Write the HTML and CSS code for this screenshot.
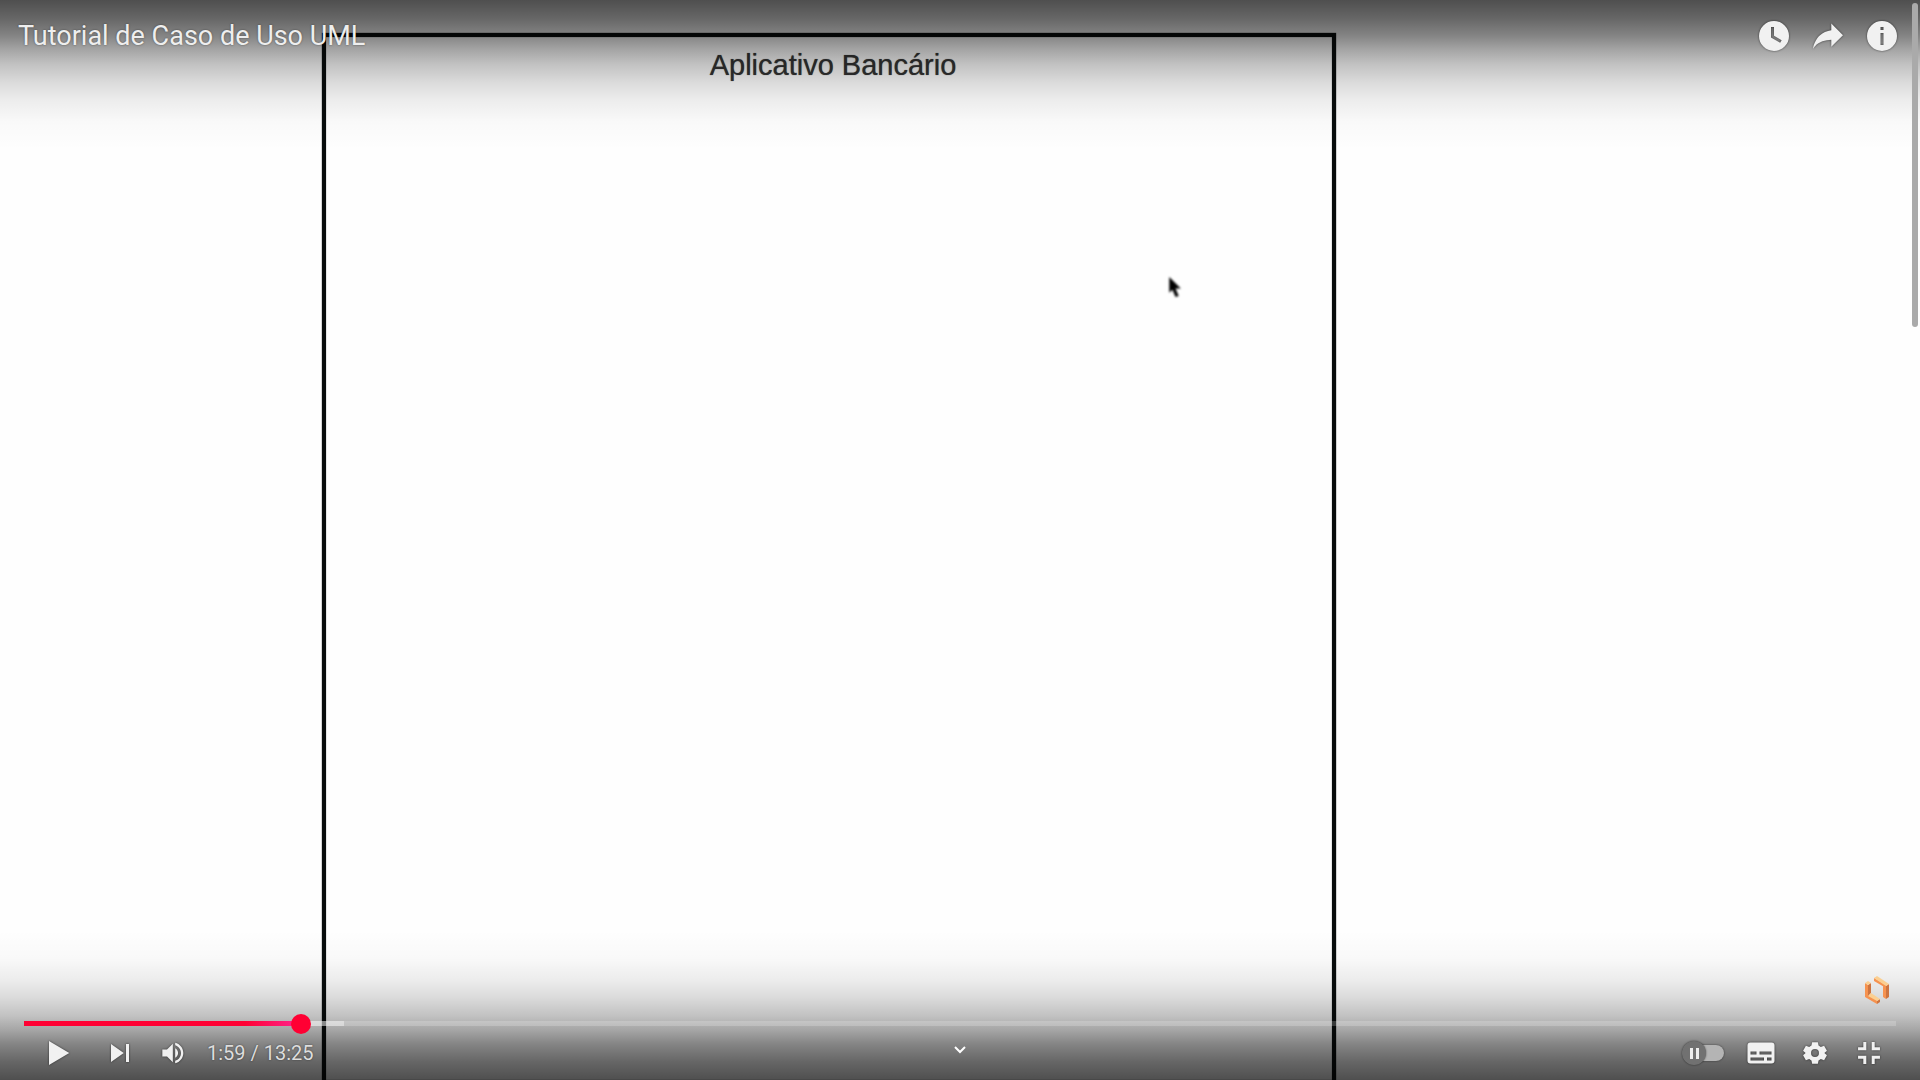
FILE: index.html
```html
<!DOCTYPE html>
<html lang="pt-BR">
<head>
<meta charset="utf-8">
<title>Tutorial de Caso de Uso UML</title>
<link rel="stylesheet" href="styles.css">
</head>
<body>
<main class="player">
  <section class="video" aria-label="Vídeo">
    <div class="frame"><h2 class="frame-title">Aplicativo Bancário</h2></div>
    <svg class="cursor" viewBox="0 0 12 19" aria-hidden="true"><path d="M1 0v15l3-3 3 7 3-1-3-7h5z" fill="#000"/></svg>
  </section>
  <div class="overlay">
    <header class="top-bar">
      <h1 class="title"><a href="#">Tutorial de Caso de Uso UML</a></h1>
      <div class="group">
        <button class="btn" aria-label="Assistir mais tarde"><svg viewBox="0 0 36 36"><path fill-rule="evenodd" d="M18 8a10 10 0 1 0 0 20 10 10 0 0 0 0-20zM16 19.02V12h2v5.86l5.1 2.95-1 1.73z"/></svg></button>
        <button class="btn" aria-label="Compartilhar"><svg viewBox="0 0 36 36"><path d="m20.2 14.19 0-4.45 7.79 7.79-7.79 7.56 0-4.56C16.27 20.69 12.1 21.81 9.34 24.76 8.8 25.13 7.6 27.29 8.12 25.65 9.08 21.32 11.8 17.18 15.98 15.38c1.33-.6 2.76-.98 4.21-1.19z"/></svg></button>
        <button class="btn" aria-label="Informações"><svg viewBox="0 0 36 36"><path fill-rule="evenodd" d="M18 8a10 10 0 1 0 0 20 10 10 0 0 0 0-20zM17 12h2v2h-2zM17 16h2v8h-2z"/></svg></button>
      </div>
    </header>
    <footer class="bottom-bar">
      <a class="watermark" href="#" aria-label="Lucidchart"><svg viewBox="0 0 24 28">
        <path fill="#f6924f" d="M0 7l3 2v11l-3-1zM18 9l3 2v12l-3-2zM0 19l3-1 9 6v4L0 21zM9 2l12 7v3L9 5z"/>
        <path fill="#cd7440" d="M3 9l3-2v10l-3 3zM21 10l3-2v13l-3 2zM12 25l3-2v3l-3 2z"/>
        <path fill="#fbcf91" d="M0 7l3-2 3 2-3 2zM9 2l3-2 12 8-3 2zM3 20l3-3 9 6-3 2z"/></svg></a>
      <div class="progress" style="--played:14.8%;--loaded:17.1%">
        <input class="seek" type="range" min="0" max="805" value="119" aria-label="Progresso">
      </div>
      <div class="controls">
        <div class="group">
          <button class="btn play" aria-label="Reproduzir"><svg viewBox="0 0 36 36"><path d="M12 26V10l13.5 8z"/></svg></button>
          <button class="btn" aria-label="Próximo"><svg viewBox="0 0 36 36"><path d="M12 24l8.5-6L12 12zM22 12v12h2V12z"/></svg></button>
          <button class="btn volume" aria-label="Volume"><svg viewBox="0 0 36 36"><path d="M8 21h4l5 5V10l-5 5H8zM19 14v8c1.48-.68 2.5-2.23 2.5-4s-1.02-3.26-2.5-4zM19 11.29c2.89.86 5 3.54 5 6.71s-2.11 5.85-5 6.71v2.06c4.01-.91 7-4.49 7-8.77s-2.99-7.86-7-8.77z"/></svg></button>
          <div class="time">1:59 / 13:25</div>
        </div>
        <button class="more" aria-label="Mais vídeos"><svg viewBox="0 0 12 8"><path d="M1 1l5 5 5-5" fill="none" stroke="#fff" stroke-width="2"/></svg></button>
        <div class="group group-end">
          <input class="autoplay" type="checkbox" aria-label="Reprodução automática">
          <button class="btn" aria-label="Legendas"><svg viewBox="0 0 36 36"><path fill-rule="evenodd" d="M11 11a2 2 0 0 0-2 2v10a2 2 0 0 0 2 2h14a2 2 0 0 0 2-2V13a2 2 0 0 0-2-2zM11 17h4v2h-4zM17 17h8v2h-8zM11 21h9v2h-9zM22 21h3v2h-3z"/></svg></button>
          <button class="btn" aria-label="Configurações"><svg viewBox="-1 -1 38 38"><path fill-rule="evenodd" d="M16 10.4h4l.5 2.4 1.6.9 2.3-.8 2 3.5-1.8 1.6-1 0 1 0 1.8 1.6-2 3.5-2.3-.8-1.6.9-.5 2.4h-4l-.5-2.4-1.6-.9-2.3.8-2-3.5 1.8-1.6-1.8-1.6 2-3.5 2.3.8 1.6-.9zM18 20.8a2.8 2.8 0 1 0 0-5.6 2.8 2.8 0 0 0 0 5.6z"/></svg></button>
          <button class="btn" aria-label="Sair da tela cheia"><svg viewBox="0 0 36 36"><path d="M10.7 14.2h3.5v-3.5h2v5.5h-5.5zM25.3 14.2h-3.5v-3.5h-2v5.5h5.5zM10.7 21.8h3.5v3.5h2v-5.5h-5.5zM25.3 21.8h-3.5v3.5h-2v-5.5h5.5z"/></svg></button>
        </div>
      </div>
    </footer>
  </div>
  <div class="scroll-thumb"></div>
</main>
</body>
</html>
```
FILE: styles.css
```css
* { box-sizing: border-box; }
body { margin: 0; background: #fff; font-family: Roboto, sans-serif; }
button { padding: 0; border: 0; background: none; cursor: pointer; }
a { color: inherit; text-decoration: none; }

.player { position: relative; display: grid; min-height: 100vh; overflow: hidden; }
.video, .overlay { grid-area: 1 / 1; }

/* Diagram shown in the video */
.video { display: grid; grid-template-columns: 322fr 1014fr 584fr; padding-top: 33px; background: #fefefe; }
.frame { grid-column: 2; border: 4px solid #080c0c; border-bottom: 0; box-shadow: 0 0 1px #080c0c, inset 0 0 1px #080c0c; }
.frame-title { margin: 11px 0 0; padding-left: 8px; text-align: center; font: 400 29px/34px "Liberation Sans", sans-serif; color: #333; text-shadow: 0 0 1px #666; }
.cursor { position: absolute; left: calc(61% - 3px); top: 277px; width: 13px; height: 20px; filter: blur(1px); }

/* Player controls */
.overlay {
  position: relative; display: flex; flex-direction: column; justify-content: space-between;
  background:
    linear-gradient(rgba(0,0,0,.69), rgba(0,0,0,.6) 18px, rgba(0,0,0,.48) 36px, rgba(0,0,0,.35) 50px, rgba(0,0,0,.24) 64px, rgba(0,0,0,.14) 82px, rgba(0,0,0,.07) 100px, rgba(0,0,0,.02) 122px, transparent 150px),
    linear-gradient(to top, rgba(0,0,0,.69), rgba(0,0,0,.6) 18px, rgba(0,0,0,.48) 36px, rgba(0,0,0,.35) 50px, rgba(0,0,0,.24) 64px, rgba(0,0,0,.14) 82px, rgba(0,0,0,.07) 100px, rgba(0,0,0,.02) 122px, transparent 150px);
}
.top-bar { display: flex; justify-content: space-between; padding: 9px 11px 0 18px; }
.title { margin: 0; font-size: 27px; line-height: 54px; font-weight: 400; color: #eee; text-shadow: 0 0 2px rgba(0,0,0,.5); }
.group { display: flex; align-items: center; }
.btn { width: 54px; height: 54px; }
.btn svg { display: block; width: 100%; height: 100%; fill: #f1f1f1; filter: drop-shadow(0 0 1px rgba(0,0,0,.6)); }
.bottom-bar { display: flex; flex-direction: column; padding: 0 24px; }
.watermark { align-self: flex-end; margin: 0 7px 17px 0; }
.watermark svg { display: block; width: 24px; height: 28px; }

.progress {
  display: flex; align-items: center; height: 5px;
  background:
    linear-gradient(to right, #f03 calc(100% - 56px), #ff2791) 0 0 / var(--played) 100% no-repeat,
    linear-gradient(rgba(255,255,255,.4), rgba(255,255,255,.4)) 0 0 / var(--loaded) 100% no-repeat,
    rgba(255,255,255,.2);
}
.seek { flex: 1; height: 20px; margin: 0 -10px; appearance: none; background: none; }
.seek::-webkit-slider-thumb { appearance: none; width: 20px; height: 20px; border-radius: 50%; background: #f03; }

.controls { display: grid; grid-template-columns: 1fr auto 1fr; align-items: center; height: 54px; }
.controls .play { margin: 0 8px 0 7px; }
.volume { width: 42px; height: 42px; margin-left: 6px; }
.time { margin-left: 12px; font-size: 20px; line-height: 54px; font-weight: 400; color: #ddd; white-space: nowrap; text-shadow: 0 0 2px rgba(0,0,0,.5); }
.more { width: 24px; height: 24px; }
.more svg { display: block; width: 12px; height: 8px; margin: 5px auto 11px; }
.group-end { justify-content: flex-end; }
.autoplay { position: relative; width: 30px; height: 16px; margin: 0 10px 0 0; border-radius: 8px; appearance: none; background: #b4b4b4; box-shadow: 0 0 2px rgba(0,0,0,.6); }
.autoplay::before {
  content: ""; position: absolute; left: -12px; top: -4px; width: 24px; height: 24px; border-radius: 50%;
  background:
    linear-gradient(#eee, #eee) 8px 7px / 3px 11px no-repeat,
    linear-gradient(#eee, #eee) 14px 7px / 3px 11px no-repeat,
    #717171;
  box-shadow: 0 0 2px rgba(0,0,0,.6);
}

.scroll-thumb { position: absolute; top: 3px; right: 2px; width: 6px; height: 30%; border-radius: 3px; background: #aaa; }
```
